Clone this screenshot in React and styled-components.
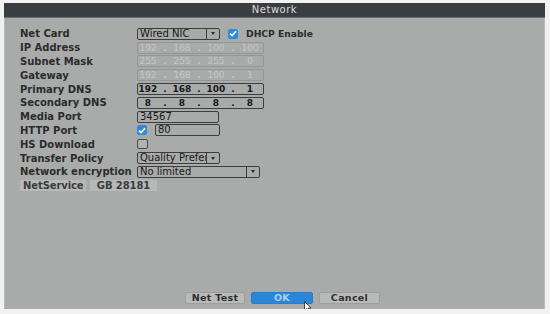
import styled, { createGlobalStyle } from 'styled-components'

const GlobalStyle = createGlobalStyle`
  html, body {
    margin: 0;
    background: #f2f2f2;
    font-family: "DejaVu Sans", "Liberation Sans", sans-serif;
  }
`

const Window = styled.div`
  margin: 3px 0 0 4px;
  width: 541px;
  height: 306px;
  background: #a9abaa;
  display: flex;
  flex-direction: column;
  box-shadow: inset 1px 0 0 #b8baba, inset -1px 0 0 #b8baba;
`

const TitleBar = styled.div`
  height: 14px;
  line-height: 14px;
  background: #3a3e42;
  border-bottom: 1px solid #6a6e70;
  color: #dadcdc;
  font-size: 10px;
  letter-spacing: 0.5px;
  text-align: center;
`

const Body = styled.div`
  flex: 1;
  display: flex;
  flex-direction: column;
  padding: 9px 0 5px 16px;
`

const Form = styled.div`
  display: grid;
  grid-template-columns: 117px 1fr;
  grid-auto-rows: 13.8px;
  align-items: center;
`

const Label = styled.div`
  font-size: 10px;
  font-weight: bold;
  color: #2a2c2c;
  white-space: nowrap;
`

const Line = styled.div`
  display: flex;
  align-items: center;
  gap: ${(p) => p.$gap || 0}px;
`

const Box = styled.div`
  box-sizing: border-box;
  height: 12px;
  width: ${(p) => p.$w}px;
  border: 1px solid ${(p) => (p.$disabled ? '#959797' : '#3c3e3e')};
  border-radius: 2px;
  display: flex;
  align-items: center;
  font-size: 10px;
  color: ${(p) => (p.$disabled ? '#c6c8c8' : '#161818')};
  overflow: hidden;
  white-space: nowrap;
`

const TextPart = styled.span`
  flex: 1;
  padding-left: 2px;
  overflow: hidden;
  line-height: 10px;
`

const Arrow = styled.span`
  width: 12px;
  height: 100%;
  border-left: 1px solid #3c3e3e;
  display: flex;
  align-items: center;
  justify-content: center;
  &::after {
    content: '';
    border-left: 2.5px solid transparent;
    border-right: 2.5px solid transparent;
    border-top: 3px solid #2a2c2c;
  }
`

const Seg = styled.span`
  width: 20px;
  text-align: center;
  font-size: 9px;
  font-weight: ${(p) => (p.$bold ? 'bold' : 'normal')};
`

const Dot = styled.span`
  width: 14px;
  text-align: center;
  font-size: 9px;
  font-weight: bold;
`

const Check = styled.span`
  box-sizing: border-box;
  width: ${(p) => (p.$on ? 10 : 11)}px;
  height: 10px;
  border-radius: 2px;
  background: ${(p) => (p.$on ? '#2e8bdb' : '#b2b4b4')};
  border: 1px solid ${(p) => (p.$on ? '#2e8bdb' : '#4a4c4c')};
  display: inline-flex;
  align-items: center;
  justify-content: center;
`

const CheckText = styled.span`
  font-size: 9.2px;
  font-weight: bold;
  color: #2a2c2c;
`

const Tabs = styled.div`
  grid-column: 1 / 3;
  display: flex;
  gap: 4px;
`

const Tab = styled.div`
  height: 11px;
  line-height: 11px;
  padding: 0 3px;
  width: ${(p) => p.$w}px;
  box-sizing: border-box;
  background: #b7b9b8;
  font-size: 10px;
  font-weight: bold;
  color: #3a3c3c;
  text-align: center;
  letter-spacing: -0.1px;
`

const Footer = styled.div`
  margin-top: auto;
  display: flex;
  justify-content: center;
  gap: 6px;
`

const Button = styled.div`
  position: relative;
  box-sizing: border-box;
  width: ${(p) => p.$w}px;
  height: 12px;
  line-height: 10px;
  border-radius: 2px;
  border: 1px solid ${(p) => (p.$primary ? '#2a7fcc' : '#9c9e9e')};
  background: ${(p) => (p.$primary ? '#2b86d7' : '#b9bbba')};
  color: ${(p) => (p.$primary ? '#a9d2f2' : '#2c2e2e')};
  font-size: 9.5px;
  font-weight: bold;
  text-align: center;
  letter-spacing: 0.3px;
`

const Cursor = styled.svg`
  position: absolute;
  left: 52px;
  top: 8px;
  width: 8px;
  height: 12px;
`

function Ip({ parts, disabled, bold }) {
  return (
    <Box $w={127} $disabled={disabled}>
      {parts.map((n, i) => (
        <Line key={i}>
          {i > 0 && <Dot>.</Dot>}
          <Seg $bold={bold}>{n}</Seg>
        </Line>
      ))}
    </Box>
  )
}

function Select({ w, children }) {
  return (
    <Box $w={w}>
      <TextPart>{children}</TextPart>
      <Arrow />
    </Box>
  )
}

function Checkbox({ on }) {
  return (
    <Check $on={on}>
      {on && (
        <svg width="8" height="7" viewBox="0 0 8 7">
          <path d="M1 3.6 L3.1 5.6 L7 1.2" fill="none" stroke="#ffffff" strokeWidth="1.5" />
        </svg>
      )}
    </Check>
  )
}

export default function App() {
  return (
    <>
      <GlobalStyle />
      <Window>
        <TitleBar>Network</TitleBar>
        <Body>
          <Form>
            <Label>Net Card</Label>
            <Line $gap={8}>
              <Select w={83}>Wired NIC</Select>
              <Checkbox on />
              <CheckText>DHCP Enable</CheckText>
            </Line>

            <Label>IP Address</Label>
            <Ip parts={['192', '168', '100', '100']} disabled />

            <Label>Subnet Mask</Label>
            <Ip parts={['255', '255', '255', '0']} disabled />

            <Label>Gateway</Label>
            <Ip parts={['192', '168', '100', '1']} disabled />

            <Label>Primary DNS</Label>
            <Ip parts={['192', '168', '100', '1']} bold />

            <Label>Secondary DNS</Label>
            <Ip parts={['8', '8', '8', '8']} bold />

            <Label>Media Port</Label>
            <Box $w={82}>
              <TextPart>34567</TextPart>
            </Box>

            <Label>HTTP Port</Label>
            <Line $gap={8}>
              <Checkbox on />
              <Box $w={65}>
                <TextPart>80</TextPart>
              </Box>
            </Line>

            <Label>HS Download</Label>
            <Line>
              <Checkbox />
            </Line>

            <Label>Transfer Policy</Label>
            <Select w={83}>Quality Preference</Select>

            <Label>Network encryption</Label>
            <Select w={123}>No limited</Select>

            <Tabs>
              <Tab $w={66}>NetService</Tab>
              <Tab $w={67}>GB 28181</Tab>
            </Tabs>
          </Form>

          <Footer>
            <Button $w={60}>Net Test</Button>
            <Button $w={62} $primary>
              OK
              <Cursor viewBox="0 0 8 12">
                <path d="M0.5 0.5 L0.5 9.5 L2.6 7.6 L4 11 L5.4 10.4 L4 7.1 L7 7.1 Z" fill="#ffffff" stroke="#222222" strokeWidth="0.8" />
              </Cursor>
            </Button>
            <Button $w={61}>Cancel</Button>
          </Footer>
        </Body>
      </Window>
    </>
  )
}
